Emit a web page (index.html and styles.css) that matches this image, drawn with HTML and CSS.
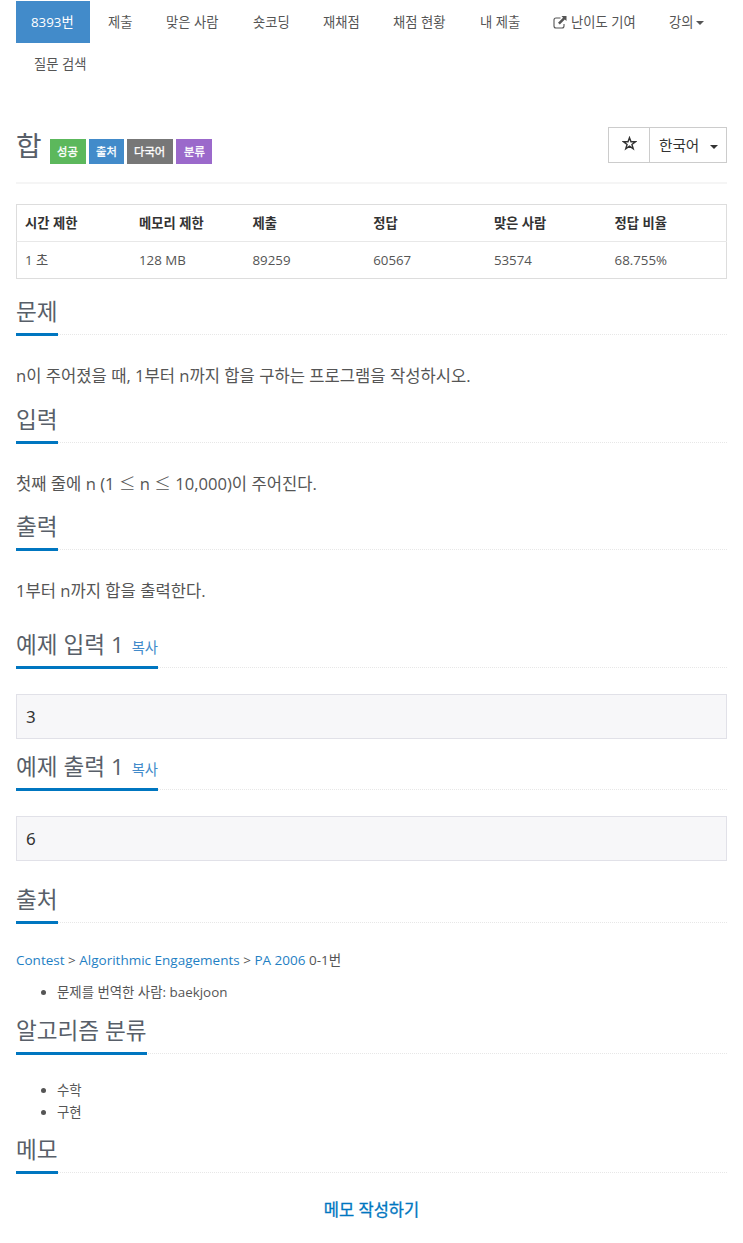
FILE: index.html
```html
<!DOCTYPE html>
<html lang="ko">
<head>
<meta charset="utf-8">
<title>8393번: 합</title>
<link rel="stylesheet" href="styles.css">
</head>
<body>
<nav class="nav">
<a class="tab active"><span>8393번</span></a><a class="tab submit"><span>제출</span></a><a class="tab solved"><span>맞은 사람</span></a><a class="tab short"><span>숏코딩</span></a><a class="tab rejudge"><span>재채점</span></a><a class="tab status"><span>채점 현황</span></a><a class="tab mine"><span>내 제출</span></a><a class="tab level"><svg class="external" viewBox="0 0 14 13"><path d="M7.5 2H3Q1 2 1 4V10Q1 12 3 12H9Q11 12 11 10V8" fill="none" stroke="currentColor" stroke-width="1.1"/><path d="M8.5 0H13.5V5L11.8 3.6L6.8 8.6L5 6.8L10 1.8Z" fill="currentColor"/></svg><span>난이도 기여</span></a><a class="tab lecture"><span>강의</span><i class="caret"></i></a><a class="tab search"><span>질문 검색</span></a>
</nav>
<header class="page-header">
<h1><span class="title">합</span></h1>
<div class="labels"><span class="label success">성공</span><span class="label source">출처</span><span class="label multi">다국어</span><span class="label category">분류</span></div>
<div class="actions"><button class="star" aria-label="즐겨찾기"><svg viewBox="0 0 16 16"><path d="M8 1.8L9.6 6.2H14.3L10.6 9L12 13.7L8 10.9L4 13.7L5.4 9L1.7 6.2H6.4Z" fill="none" stroke="currentColor" stroke-width="1.5"/></svg></button><button class="language"><span>한국어</span><i class="caret"></i></button></div>
</header>
<table class="info">
<thead><tr><th class="narrow">시간 제한</th><th class="narrow">메모리 제한</th><th class="wide">제출</th><th class="wide">정답</th><th class="wide">맞은 사람</th><th>정답 비율</th></tr></thead>
<tbody><tr><td>1 초</td><td>128 MB</td><td>89259</td><td>60567</td><td>53574</td><td>68.755%</td></tr></tbody>
</table>
<main>
<section class="problem"><div class="headline"><h2>문제</h2></div><p class="text">n이 주어졌을 때, 1부터 n까지 합을 구하는 프로그램을 작성하시오.</p></section>
<section class="input"><div class="headline"><h2>입력</h2></div><p class="text">첫째 줄에 n (1 <span class="math">≤</span> n <span class="math">≤</span> 10,000)이 주어진다.</p></section>
<section class="output"><div class="headline"><h2>출력</h2></div><p class="text">1부터 n까지 합을 출력한다.</p></section>
<section class="sample-input"><div class="headline"><h2>예제 입력 1 <a class="copy">복사</a></h2></div><pre>3</pre></section>
<section class="sample-output"><div class="headline"><h2>예제 출력 1 <a class="copy">복사</a></h2></div><pre>6</pre></section>
<section class="origin"><div class="headline"><h2>출처</h2></div><p class="crumbs"><a>Contest</a> &gt; <a>Algorithmic Engagements</a> &gt; <a>PA 2006</a> 0-1번</p><ul><li>문제를 번역한 사람: baekjoon</li></ul></section>
<section class="tags"><div class="headline"><h2>알고리즘 분류</h2></div><ul><li>수학</li><li>구현</li></ul></section>
<section class="memo"><div class="headline"><h2>메모</h2></div><a class="write">메모 작성하기</a></section>
</main>
</body>
</html>
```
FILE: styles.css
```css
* { box-sizing: border-box; }
body { margin: 0; padding: 1px 16px 0; height: 1243px; background: #fff; color: #555; font: 13.3px/22px "Open Sans", "Noto Sans CJK KR", sans-serif; }
h1, h2, p, ul, pre { margin: 0; font-weight: 400; }
a { color: #337ab7; text-decoration: none; }
.nav { display: flex; flex-wrap: wrap; height: 84px; align-content: flex-start; }
.tab { display: flex; align-items: center; height: 42px; color: #555; white-space: nowrap; padding-left: 18px; }
.active { width: 74px; background: #428bca; color: #fff; padding-left: 15px; }
.submit { width: 58px; }
.solved { width: 87px; }
.short { width: 70px; }
.rejudge { width: 70px; }
.status { width: 87px; }
.mine { width: 73px; }
.level { width: 116px; }
.lecture { width: 60px; }
.external { width: 14px; height: 13px; margin-right: 4px; }
.caret { border: 4px solid transparent; border-top-color: currentColor; border-bottom: 0; margin-left: 3px; margin-top: 2px; }
.page-header { display: flex; height: 99px; border-bottom: 2px solid #f5f5f5; }
h1 { width: 34px; padding-top: 42px; color: #585f69; font-size: 27.8px; line-height: 36px; }
.labels { display: flex; gap: 3px; padding-top: 54px; height: 79px; }
.label { height: 25px; padding: 0 7px; color: #fff; font-size: 11.3px; line-height: 25px; -webkit-text-stroke: 0.3px; }
.success { background: #5cb85c; width: 36px; }
.source { background: #428bca; width: 35px; }
.multi { background: #777; width: 46px; }
.category { background: #9b69cb; width: 36px; padding-left: 8px; }
.actions { display: flex; margin-left: auto; padding-top: 42px; height: 78px; }
button { display: flex; align-items: center; height: 36px; padding: 0; border: 1px solid #ccc; background: #fff; color: #333; font: 14.6px/20px "Open Sans", "Noto Sans CJK KR", sans-serif; }
.star { width: 41px; justify-content: center; border-right: 0; }
.star svg { width: 15px; height: 15px; margin-bottom: 4px; }
.language { width: 78px; padding-left: 9px; }
.language .caret { margin-left: 11px; margin-top: 3px; }
.info { width: 711px; margin-top: 20px; border: 1px solid #ddd; border-collapse: collapse; table-layout: fixed; color: #555; }
th, td { text-align: left; padding: 0 9px; height: 37px; }
th:first-child, td:first-child { padding-left: 8px; }
th { border-bottom: 1px solid #e8e8e8; color: #333; font-weight: 700; }
.narrow { width: 113.5px; }
.wide { width: 120.7px; }
main { display: flex; flex-direction: column; padding-top: 16px; }
.problem { height: 108px; }
.input { height: 107px; }
.output { height: 118px; }
.sample-input { height: 122px; }
.sample-output { height: 133px; }
.origin { height: 131px; }
.tags { height: 119px; }
.headline { display: flex; height: 40px; border-bottom: 1px dotted #e7e7e7; }
h2 { height: 41px; color: #585f69; font-size: 22.6px; line-height: 34px; border-bottom: 3px solid #0076c0; white-space: nowrap; }
.copy { margin-left: 2px; font-size: 14.3px; color: #428bca; }
.text { padding-top: 27px; font-size: 16.6px; line-height: 27px; }
.math { display: inline-block; line-height: 20px; font-family: "Noto Sans CJK KR", sans-serif; font-weight: 300; }
pre { height: 45px; margin-top: 26px; padding: 0 9px; border: 1px solid #e1e1e8; background: #f7f7f9; color: #333; font: 17px/44px "Noto Sans", sans-serif; }
.crumbs { padding-top: 26px; font-size: 13.5px; }
.crumbs a { color: #1f7fc4; }
ul { padding-left: 41px; }
li { font-size: 13.4px; }
.origin ul { padding-top: 10px; }
.tags ul { padding-top: 25px; }
.write { display: block; padding-top: 26px; text-align: center; font-size: 16.5px; -webkit-text-stroke: 0.3px; color: #0076c0; }
```
